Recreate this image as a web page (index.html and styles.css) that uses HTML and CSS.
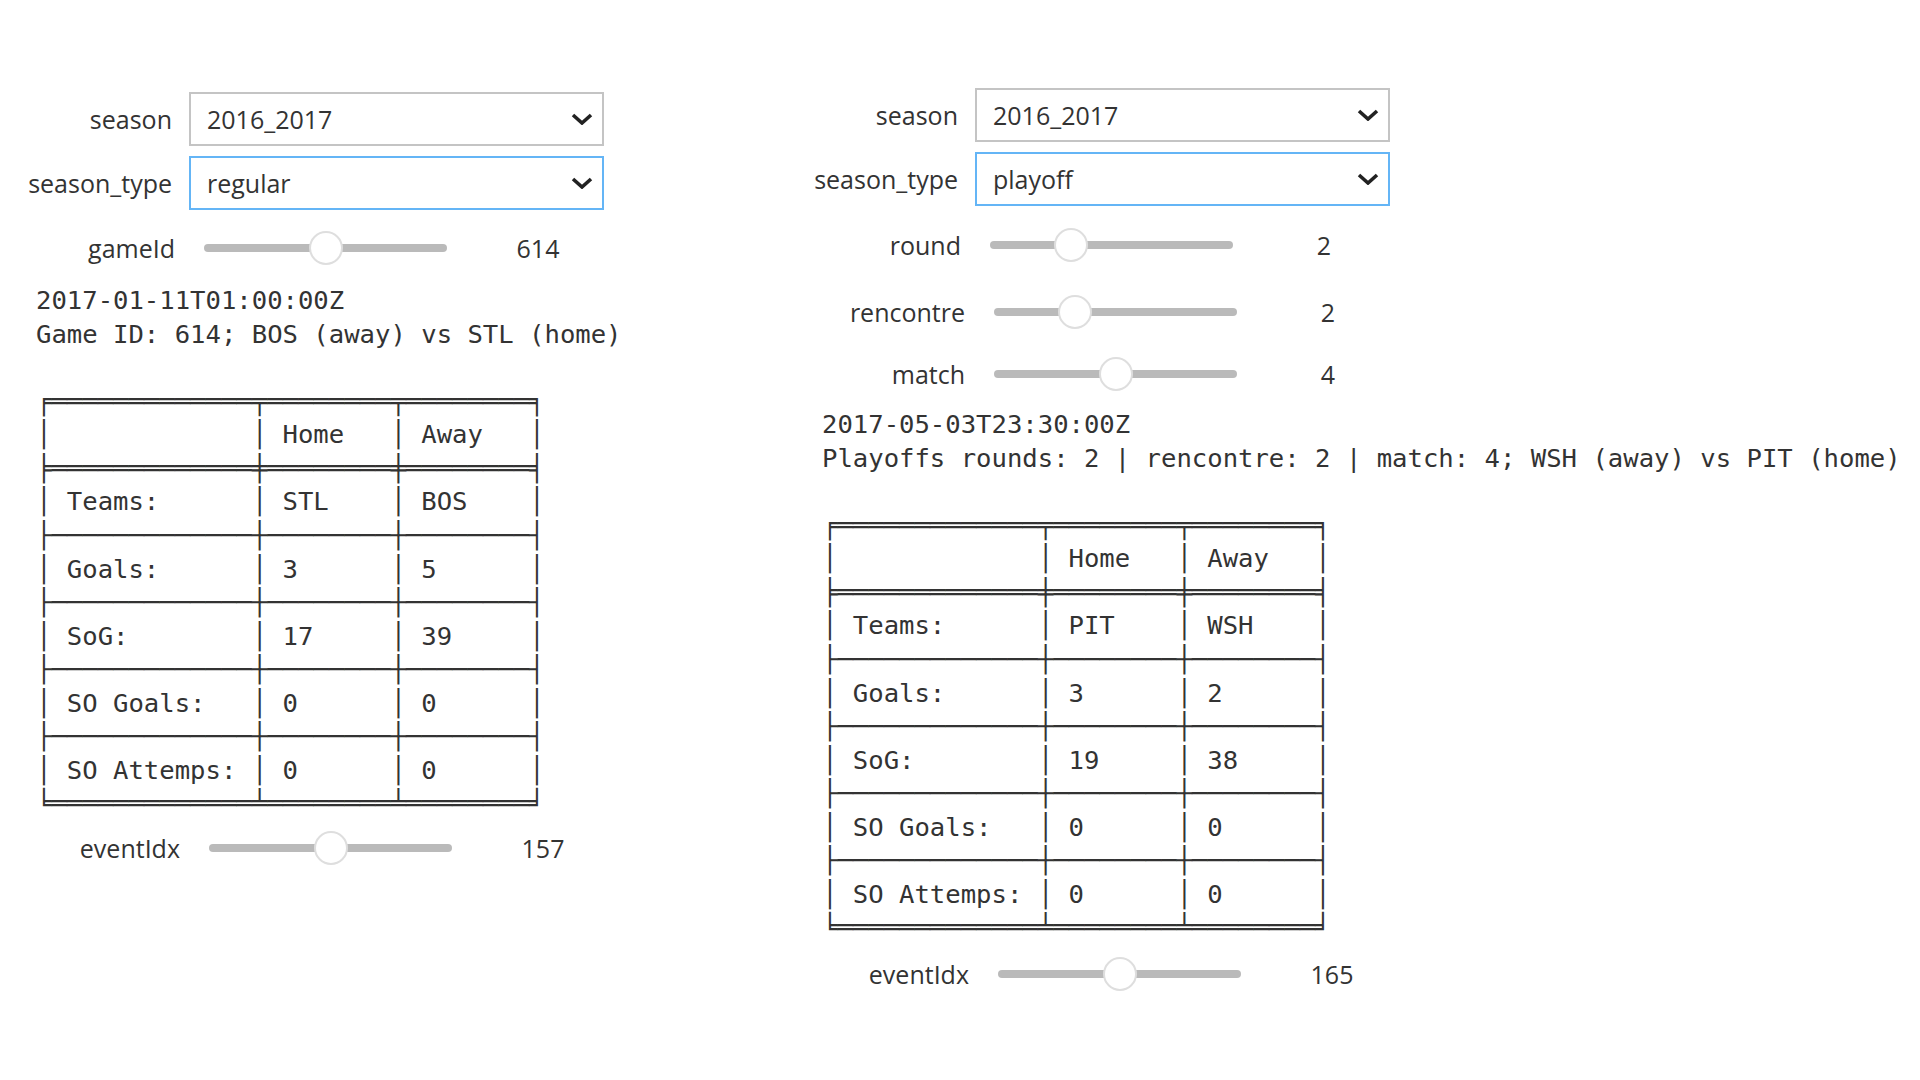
FILE: index.html
```html
<!DOCTYPE html>
<html lang="en">
<head>
    <meta charset="UTF-8">
    <title>Game browser</title>
    <link rel="stylesheet" href="styles.css">
</head>
<body>
    <div class="page">
        <!-- regular season widget -->
        <section class="panel panel-regular">
            <div class="widget dropdown-row">
                <label class="desc">season</label>
                <div class="select">
                    <span>2016_2017</span>
                    <svg class="chevron" width="22" height="12" viewBox="0 0 22 12"><polyline points="2,2 11,10 20,2"/></svg>
                </div>
            </div>
            <div class="widget dropdown-row">
                <label class="desc">season_type</label>
                <div class="select focused">
                    <span>regular</span>
                    <svg class="chevron" width="22" height="12" viewBox="0 0 22 12"><polyline points="2,2 11,10 20,2"/></svg>
                </div>
            </div>
            <div class="widget slider-row first-slider">
                <label class="desc">gameId</label>
                <div class="slider"><div class="track"></div><div class="thumb" style="left: 50%"></div></div>
                <span class="readout">614</span>
            </div>
<pre class="output">2017-01-11T01:00:00Z
Game ID: 614; BOS (away) vs STL (home)

╒═════════════╤════════╤════════╕
│             │ Home   │ Away   │
╞═════════════╪════════╪════════╡
│ Teams:      │ STL    │ BOS    │
├─────────────┼────────┼────────┤
│ Goals:      │ 3      │ 5      │
├─────────────┼────────┼────────┤
│ SoG:        │ 17     │ 39     │
├─────────────┼────────┼────────┤
│ SO Goals:   │ 0      │ 0      │
├─────────────┼────────┼────────┤
│ SO Attemps: │ 0      │ 0      │
╘═════════════╧════════╧════════╛</pre>
            <div class="widget slider-row event-slider">
                <label class="desc">eventIdx</label>
                <div class="slider"><div class="track"></div><div class="thumb" style="left: 50%"></div></div>
                <span class="readout">157</span>
            </div>
        </section>

        <!-- playoff widget -->
        <section class="panel panel-playoff">
            <div class="widget dropdown-row">
                <label class="desc">season</label>
                <div class="select">
                    <span>2016_2017</span>
                    <svg class="chevron" width="22" height="12" viewBox="0 0 22 12"><polyline points="2,2 11,10 20,2"/></svg>
                </div>
            </div>
            <div class="widget dropdown-row">
                <label class="desc">season_type</label>
                <div class="select focused">
                    <span>playoff</span>
                    <svg class="chevron" width="22" height="12" viewBox="0 0 22 12"><polyline points="2,2 11,10 20,2"/></svg>
                </div>
            </div>
            <div class="widget slider-row first-slider">
                <label class="desc">round</label>
                <div class="slider"><div class="track"></div><div class="thumb" style="left: 33.3%"></div></div>
                <span class="readout">2</span>
            </div>
            <div class="widget slider-row nested rencontre-row">
                <label class="desc">rencontre</label>
                <div class="slider"><div class="track"></div><div class="thumb" style="left: 33.3%"></div></div>
                <span class="readout">2</span>
            </div>
            <div class="widget slider-row nested match-row">
                <label class="desc">match</label>
                <div class="slider"><div class="track"></div><div class="thumb" style="left: 50%"></div></div>
                <span class="readout">4</span>
            </div>
<pre class="output">2017-05-03T23:30:00Z
Playoffs rounds: 2 | rencontre: 2 | match: 4; WSH (away) vs PIT (home)

╒═════════════╤════════╤════════╕
│             │ Home   │ Away   │
╞═════════════╪════════╪════════╡
│ Teams:      │ PIT    │ WSH    │
├─────────────┼────────┼────────┤
│ Goals:      │ 3      │ 2      │
├─────────────┼────────┼────────┤
│ SoG:        │ 19     │ 38     │
├─────────────┼────────┼────────┤
│ SO Goals:   │ 0      │ 0      │
├─────────────┼────────┼────────┤
│ SO Attemps: │ 0      │ 0      │
╘═════════════╧════════╧════════╛</pre>
            <div class="widget slider-row event-slider">
                <label class="desc">eventIdx</label>
                <div class="slider"><div class="track"></div><div class="thumb" style="left: 50%"></div></div>
                <span class="readout">165</span>
            </div>
        </section>
    </div>
</body>
</html>
```

FILE: styles.css
```css
body {
    margin: 0;
    background-color: #fff;
    color: #333;
    font-family: "Open Sans", "Noto Sans", sans-serif;
}
.page {
    display: flex;
    align-items: flex-start;
}
.panel {
    width: 786px;
    flex: none;
}
.panel-regular {
    padding-top: 92px;
}
.panel-playoff {
    padding-top: 88px;
}
.widget {
    display: flex;
    align-items: center;
    font-size: 25px;
}
.desc {
    width: 172px;
    flex: none;
    text-align: right;
    white-space: nowrap;
    direction: rtl;
}
.dropdown-row {
    height: 54px;
    margin-bottom: 10px;
}
.dropdown-row .desc {
    margin-right: 17px;
}
.select {
    box-sizing: border-box;
    width: 415px;
    height: 54px;
    border: 2px solid #c4c4c4;
    display: flex;
    align-items: center;
    justify-content: space-between;
    padding: 0 9px 0 16px;
}
.select.focused {
    border-color: #64b5f6;
}
.chevron polyline {
    fill: none;
    stroke: #222;
    stroke-width: 3.6;
}
.slider-row {
    height: 60px;
}
.slider-row .desc {
    width: 175px;
    margin-right: 29px;
}
.first-slider {
    margin-top: -2px;
}
.panel-playoff .first-slider {
    margin-top: -1px;
}
.nested {
    padding-left: 4px;
}
.rencontre-row {
    margin-top: 7px;
}
.match-row {
    margin-top: 2px;
}
.slider {
    position: relative;
    width: 243px;
    height: 8px;
    flex: none;
}
.track {
    height: 8px;
    border-radius: 4px;
    background-color: #bababa;
}
.thumb {
    position: absolute;
    top: -13px;
    width: 30px;
    height: 30px;
    margin-left: -17px;
    border: 2px solid #dedede;
    border-radius: 50%;
    background-color: #fff;
}
.readout {
    width: 100px;
    margin-left: 41px;
    text-align: center;
}
.output {
    margin: 6px 0 0 0;
    padding-left: 36px;
    font-family: "DejaVu Sans Mono", monospace;
    font-size: 25.6px;
    line-height: 33.57px;
    color: #333;
    white-space: pre;
}
.panel-playoff .output {
    margin-top: 4px;
}
.event-slider {
    height: 54px;
    padding-left: 5px;
}
.panel-playoff .event-slider {
    padding-left: 8px;
    margin-top: 2px;
}
```
